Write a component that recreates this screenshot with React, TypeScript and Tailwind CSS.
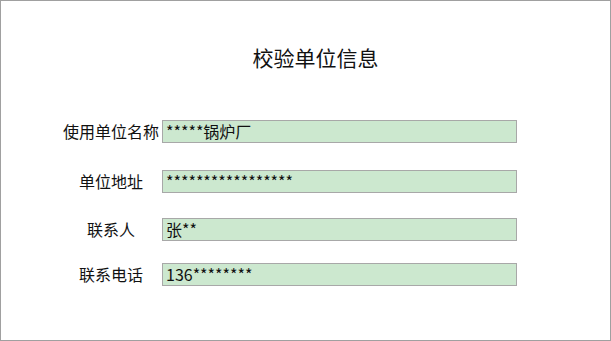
import React from 'react';

const rows = [
  { label: '使用单位名称', value: '*****锅炉厂', mt: 'mt-[47px]' },
  { label: '单位地址', value: '*****************', mt: 'mt-[27px]' },
  { label: '联系人', value: '张**', mt: 'mt-[25px]' },
  { label: '联系电话', value: '136********', mt: 'mt-[22px]' },
];

const App: React.FC = () => {
  return (
    <div
      className="w-[611px] h-[341px] border border-[#a0a0a0] bg-white text-[#111] pt-[40px]"
      style={{ fontFamily: '"Noto Sans CJK SC", "Noto Sans", sans-serif' }}
    >
      {/* 标题 */}
      <div className="h-[32px] leading-[32px] text-[21px] text-center pl-[20px]">校验单位信息</div>

      {/* 表单 */}
      <div className="pl-[60px]">
        {rows.map((row) => (
          <div key={row.label} className={`flex items-center ${row.mt}`}>
            <div className="w-[100px] text-center text-[16px] leading-[23px]">{row.label}</div>
            <div className="ml-px w-[355px] h-[23px] border border-[#a8a8a8] bg-[#cce8cf] px-[3px] text-[16px] leading-[21px]">
              {row.value}
            </div>
          </div>
        ))}
      </div>
    </div>
  );
};

export default App;
